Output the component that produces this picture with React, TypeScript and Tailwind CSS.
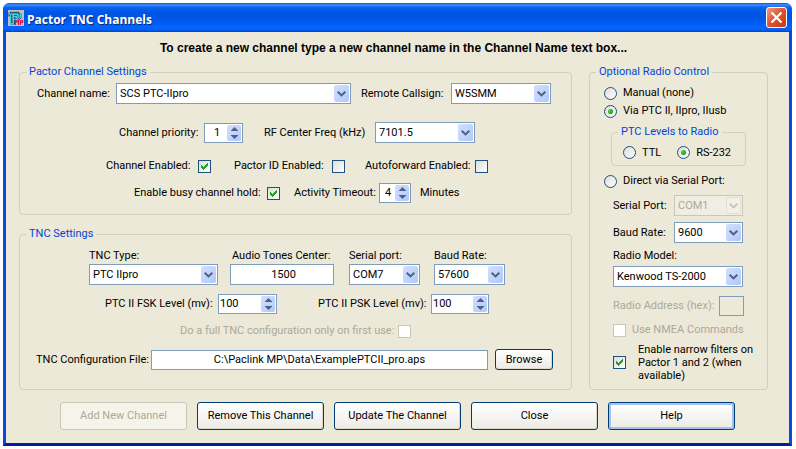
import React from "react";

const font = "font-['Roboto','Liberation_Sans',sans-serif]";

function Caption({
  htmlFor,
  children,
  className = "",
  disabled = false,
}: {
  htmlFor: string;
  children: React.ReactNode;
  className?: string;
  disabled?: boolean;
}) {
  return (
    <label htmlFor={htmlFor} className={`shrink-0 whitespace-nowrap ${disabled ? "text-[#aca899]" : ""} ${className}`}>
      {children}
    </label>
  );
}

function Group({ title, children, className = "" }: { title: string; children: React.ReactNode; className?: string }) {
  return (
    <fieldset className={`min-w-0 rounded-[4px] border border-[#d0d0bf] px-[6px] ${className}`}>
      <legend className="whitespace-nowrap px-[3px] leading-4 text-[#0046d5]">{title}</legend>
      {children}
    </fieldset>
  );
}

function Combo({
  id,
  value,
  className = "",
  disabled = false,
}: {
  id: string;
  value: string;
  className?: string;
  disabled?: boolean;
}) {
  return (
    <div className={`relative h-[21px] ${className}`}>
      <select
        id={id}
        disabled={disabled}
        className={`block h-full w-full appearance-none border pl-[3px] pr-5 leading-[18px] outline-none ${
          disabled ? "border-[#c9c7ba] bg-[#f0eee2] text-[#aca899] opacity-100" : "border-[#7f9db9] bg-white text-black"
        }`}
      >
        <option>{value}</option>
      </select>
      <span
        className={`pointer-events-none absolute bottom-[2px] right-[2px] top-[2px] flex w-[15px] items-center justify-center rounded-[2px] ${
          disabled ? "border border-[#e0dfd0] bg-[#f2f1e8]" : "bg-gradient-to-br from-[#d3e0fd] to-[#b0c8f8]"
        }`}
      >
        <svg width="9" height="6" viewBox="0 0 9 6" fill="none" stroke={disabled ? "#c9c7ba" : "#4d6185"} strokeWidth="2">
          <path d="M0.7 0.7 L4.5 4.4 L8.3 0.7" />
        </svg>
      </span>
    </div>
  );
}

function Spinner({ id, value, className = "", inputClass = "" }: { id: string; value: string; className?: string; inputClass?: string }) {
  return (
    <div className={`flex h-5 shrink-0 border border-[#7f9db9] bg-white p-px ${className}`}>
      <input id={id} defaultValue={value} className={`w-0 min-w-0 flex-1 bg-transparent leading-4 outline-none ${inputClass}`} />
      <span className="flex w-[14px] flex-col overflow-hidden rounded-[2px] bg-gradient-to-br from-[#d3e0fd] to-[#b0c8f8]">
        <button type="button" aria-label="Increase" className="flex flex-1 items-center justify-center">
          <svg width="7" height="4" viewBox="0 0 7 4" fill="#4d6185">
            <path d="M3.5 0 L7 3.5 V4 H0 V3.5 Z" />
          </svg>
        </button>
        <button type="button" aria-label="Decrease" className="flex flex-1 items-center justify-center">
          <svg width="7" height="4" viewBox="0 0 7 4" fill="#4d6185">
            <path d="M3.5 4 L7 0.5 V0 H0 V0.5 Z" />
          </svg>
        </button>
      </span>
    </div>
  );
}

function Check({ id, checked = false, disabled = false }: { id: string; checked?: boolean; disabled?: boolean }) {
  return (
    <span className="relative size-[13px] shrink-0">
      <input
        id={id}
        type="checkbox"
        defaultChecked={checked}
        disabled={disabled}
        className={`peer block size-[13px] appearance-none border ${
          disabled ? "border-[#cac8bb] bg-white" : "border-[#1c5180] bg-gradient-to-br from-[#dcdcd7] to-white"
        }`}
      />
      <svg
        className="pointer-events-none absolute inset-0 hidden peer-checked:block"
        width="13"
        height="13"
        viewBox="0 0 13 13"
        fill="#21a121"
      >
        <path d="M3 5h1v1h1v1h1V6h1V5h1V4h1V3h1v3H9v1H8v1H7v1H6v1H5V9H4V8H3z" />
      </svg>
    </span>
  );
}

function Radio({ id, name, label, checked = false }: { id: string; name: string; label: string; checked?: boolean }) {
  return (
    <div className="flex items-center gap-[6px]">
      <span className="relative size-[13px] shrink-0">
        <input
          id={id}
          name={name}
          type="radio"
          defaultChecked={checked}
          className="peer block size-[13px] appearance-none rounded-full border border-[#1c5180] bg-gradient-to-br from-[#dcdcd7] to-white"
        />
        <span className="pointer-events-none absolute inset-1 hidden rounded-full bg-[radial-gradient(circle_at_35%_35%,#55d551,#21a121_60%)] peer-checked:block" />
      </span>
      <label htmlFor={id} className="whitespace-nowrap">
        {label}
      </label>
    </div>
  );
}

function PushButton({
  children,
  className = "",
  disabled = false,
  focused = false,
}: {
  children: React.ReactNode;
  className?: string;
  disabled?: boolean;
  focused?: boolean;
}) {
  const look = disabled
    ? "border-[#c9c7ba] bg-[#f5f4ea] text-[#aca899]"
    : focused
      ? "border-[#003c74] bg-gradient-to-b from-white to-[#ecebe5] text-black shadow-[inset_0_0_0_2px_#a5c0f2]"
      : "border-[#003c74] bg-gradient-to-b from-white to-[#ecebe5] text-black shadow-[inset_-1px_-1px_0_#dcd8cc]";
  return (
    <button type="button" disabled={disabled} className={`whitespace-nowrap rounded-[3px] border ${look} ${className}`}>
      {children}
    </button>
  );
}

function TitleBar() {
  return (
    <header className="flex h-[29px] items-center gap-[3px] rounded-t-[6px] bg-[linear-gradient(180deg,#0a4fd0_0%,#3c8cf8_6%,#0a62ee_16%,#0054e3_35%,#0055e5_55%,#0066ff_85%,#0060f5_92%,#0040c8_100%)] pl-[5px] pr-[5px]">
      <svg width="16" height="16" viewBox="0 0 16 16" fill="none">
        <rect width="16" height="16" fill="#c0c0c0" />
        <path d="M1.500 2.500H10.500L12.500 4.500V7.500L10.500 9.500H6.500M1.500 2.500V5.500H3.500V13.500H6.500V5.500H9.500V7.500" stroke="#1a5a88" strokeWidth="2" />
        <path d="M1.500 1.500H10.500L12.500 3.500V7.500L10.500 9.500H5.500M1.500 1.500V4.500H2.500V13.500H5.500V4.500H9.500V6.500H5.500" stroke="#20e0f0" />
        <path d="M7.500 15V10.500L9 12L10.500 10.500V15M12.500 15V10.500H14.500V12.500H12.500" stroke="#e0104c" strokeWidth="1.200" />
      </svg>
      <h1 className="flex-1 pt-1 font-['Open_Sans','Noto_Sans',sans-serif] text-[12px] font-bold leading-4 text-white [text-shadow:1px_1px_0_#0a2a80]">
        Pactor TNC Channels
      </h1>
      <button
        type="button"
        aria-label="Close window"
        className="flex size-[21px] items-center justify-center rounded-[3px] border border-white bg-gradient-to-br from-[#f09a80] via-[#e0502c] to-[#c63a12]"
      >
        <svg width="11" height="11" viewBox="0 0 11 11" stroke="white" strokeWidth="2.200">
          <path d="M0.500 0.500L10.500 10.500M10.500 0.500L0.500 10.500" />
        </svg>
      </button>
    </header>
  );
}

function ChannelSettings() {
  return (
    <Group title="Pactor Channel Settings" className="h-[151px]">
      <div className="mt-[3px] flex items-center pr-[14px]">
        <Caption htmlFor="name" className="w-[90px] pl-[11px]">Channel name:</Caption>
        <Combo id="name" value="SCS PTC-IIpro" className="flex-1" />
        <Caption htmlFor="callsign" className="w-[100px] pl-[10px]">Remote Callsign:</Caption>
        <Combo id="callsign" value="W5SMM" className="w-[100px]" />
      </div>
      <div className="mt-[18px] flex items-center pl-[93px]">
        <Caption htmlFor="priority" className="w-[85px]">Channel priority:</Caption>
        <Spinner id="priority" value="1" className="w-[39px]" inputClass="pl-2" />
        <Caption htmlFor="freq" className="ml-[21px] w-[111px]">RF Center Freq (kHz)</Caption>
        <Combo id="freq" value="7101.5" className="w-[100px]" />
      </div>
      <div className="mt-[14px] flex h-[18px] items-center pl-[80px]">
        <Caption htmlFor="enabled" className="w-[92px]">Channel Enabled:</Caption>
        <Check id="enabled" checked />
        <Caption htmlFor="pactorid" className="ml-[23px] w-[98px]">Pactor ID Enabled:</Caption>
        <Check id="pactorid" />
        <Caption htmlFor="autoforward" className="ml-5 w-[110px]">Autoforward Enabled:</Caption>
        <Check id="autoforward" />
      </div>
      <div className="mt-2 flex items-center pl-[108px]">
        <Caption htmlFor="busy" className="w-[133px]">Enable busy channel hold:</Caption>
        <Check id="busy" checked />
        <Caption htmlFor="timeout" className="ml-[14px] w-[85px]">Activity Timeout:</Caption>
        <Spinner id="timeout" value="4" className="w-[32px]" inputClass="pl-1" />
        <span className="ml-[9px]">Minutes</span>
      </div>
    </Group>
  );
}

function TncSettings() {
  return (
    <Group title="TNC Settings" className="mt-[11px] h-[164px]">
      <div className="mt-[6px] flex items-end pl-[63px]">
        <div className="flex w-[129px] flex-col">
          <Caption htmlFor="tnctype">TNC Type:</Caption>
          <Combo id="tnctype" value="PTC IIpro" className="w-full" />
        </div>
        <div className="ml-3 flex w-[104px] flex-col">
          <Caption htmlFor="tones" className="pl-[2px]">Audio Tones Center:</Caption>
          <input
            id="tones"
            defaultValue="1500"
            className="h-[21px] w-full border border-[#7f9db9] bg-white pl-[3px] text-center outline-none"
          />
        </div>
        <div className="ml-[15px] flex w-[71px] flex-col">
          <Caption htmlFor="port">Serial port:</Caption>
          <Combo id="port" value="COM7" className="w-full" />
        </div>
        <div className="ml-[14px] flex w-[71px] flex-col">
          <Caption htmlFor="baud">Baud Rate:</Caption>
          <Combo id="baud" value="57600" className="w-full" />
        </div>
      </div>
      <div className="mt-[9px] flex items-center pl-[79px]">
        <Caption htmlFor="fsk" className="w-[113px]">PTC II FSK Level (mv):</Caption>
        <Spinner id="fsk" value="100" className="w-[59px]" />
        <Caption htmlFor="psk" className="ml-[41px] w-[113px]">PTC II PSK Level (mv):</Caption>
        <Spinner id="psk" value="100" className="w-[58px]" />
      </div>
      <div className="mt-[8px] flex h-[18px] items-center pl-[154px]">
        <Caption htmlFor="full" disabled className="w-[218px]">Do a full TNC configuration only on first use:</Caption>
        <Check id="full" disabled />
      </div>
      <div className="mt-[9px] flex items-center pl-[10px] pr-[12px]">
        <Caption htmlFor="file" className="w-[115px]">TNC Configuration File:</Caption>
        <input
          id="file"
          defaultValue="C:\Paclink MP\Data\ExamplePTCII_pro.aps"
          className="h-5 w-0 flex-1 border border-[#7f9db9] bg-white text-center outline-none"
        />
        <PushButton className="ml-[7px] h-[21px] w-[58px]">Browse</PushButton>
      </div>
    </Group>
  );
}

function RadioControl() {
  return (
    <Group title="Optional Radio Control" className="w-[179px] shrink-0">
      <div className="mt-1 flex flex-col pl-2">
        <div className="flex h-[18px] items-center">
          <Radio id="manual" name="control" label="Manual (none)" />
        </div>
        <div className="flex h-[18px] items-center">
          <Radio id="viaptc" name="control" label="Via PTC II, IIpro, IIusb" checked />
        </div>
      </div>
      <Group title="PTC Levels to Radio" className="ml-[15px] mr-[15px] mt-1">
        <div className="flex h-[25px] items-center gap-4 pl-[5px]">
          <Radio id="ttl" name="levels" label="TTL" />
          <Radio id="rs232" name="levels" label="RS-232" checked />
        </div>
      </Group>
      <div className="mt-[6px] flex h-[18px] items-center pl-2">
        <Radio id="direct" name="control" label="Direct via Serial Port:" />
      </div>
      <div className="flex flex-col pl-[17px] pr-[18px]">
        <div className="mt-[5px] flex items-center">
          <Caption htmlFor="rport" className="w-[61px]">Serial Port:</Caption>
          <Combo id="rport" value="COM1" className="flex-1" disabled />
        </div>
        <div className="mt-[6px] flex items-center">
          <Caption htmlFor="rbaud" className="w-[61px]">Baud Rate:</Caption>
          <Combo id="rbaud" value="9600" className="flex-1" />
        </div>
        <Caption htmlFor="model" className="mt-[5px]">Radio Model:</Caption>
        <Combo id="model" value="Kenwood TS-2000" className="mt-[2px] w-full" />
        <div className="mt-[9px] flex items-center">
          <Caption htmlFor="address" disabled className="w-[106px]">Radio Address (hex):</Caption>
          <input id="address" disabled className="h-5 w-[25px] border border-[#7f9db9] bg-[#ece9d8]" />
        </div>
        <div className="mt-[5px] flex h-[18px] items-center gap-[6px]">
          <Check id="nmea" disabled />
          <Caption htmlFor="nmea" disabled>Use NMEA Commands</Caption>
        </div>
        <div className="mt-1 flex items-center gap-3">
          <Check id="narrow" checked />
          <label htmlFor="narrow" className="whitespace-nowrap leading-[13px]">
            Enable narrow filters on
            <br />
            Pactor 1 and 2 (when
            <br />
            available)
          </label>
        </div>
      </div>
    </Group>
  );
}

export default function App() {
  return (
    <div className={`min-h-screen bg-white py-[3px] pl-[3px] pr-1 text-[11px] leading-4 text-black ${font}`}>
      <form className="rounded-t-[8px] bg-[#0831d9]">
        <TitleBar />
        <main className="border-x-[3px] border-b-[3px] border-[#0a48e0] border-b-[#001ea0] bg-[#ece9d8] pb-[13px] pl-[13px] pr-[21px]">
          <p className="pt-2 text-center text-[12px] font-bold font-['Liberation_Sans',sans-serif]">
            To create a new channel type a new channel name in the Channel Name text box...
          </p>
          <div className="mt-2 flex gap-[17px]">
            <div className="min-w-0 flex-1">
              <ChannelSettings />
              <TncSettings />
            </div>
            <RadioControl />
          </div>
          <div className="mt-3 flex justify-center gap-[10px] pl-2">
            <PushButton disabled className="h-7 w-[127px]">Add New Channel</PushButton>
            <PushButton className="h-7 w-[127px]">Remove This Channel</PushButton>
            <PushButton className="h-7 w-[127px]">Update The Channel</PushButton>
            <PushButton className="h-7 w-[127px]">Close</PushButton>
            <PushButton focused className="h-7 w-[127px]">Help</PushButton>
          </div>
        </main>
      </form>
    </div>
  );
}
